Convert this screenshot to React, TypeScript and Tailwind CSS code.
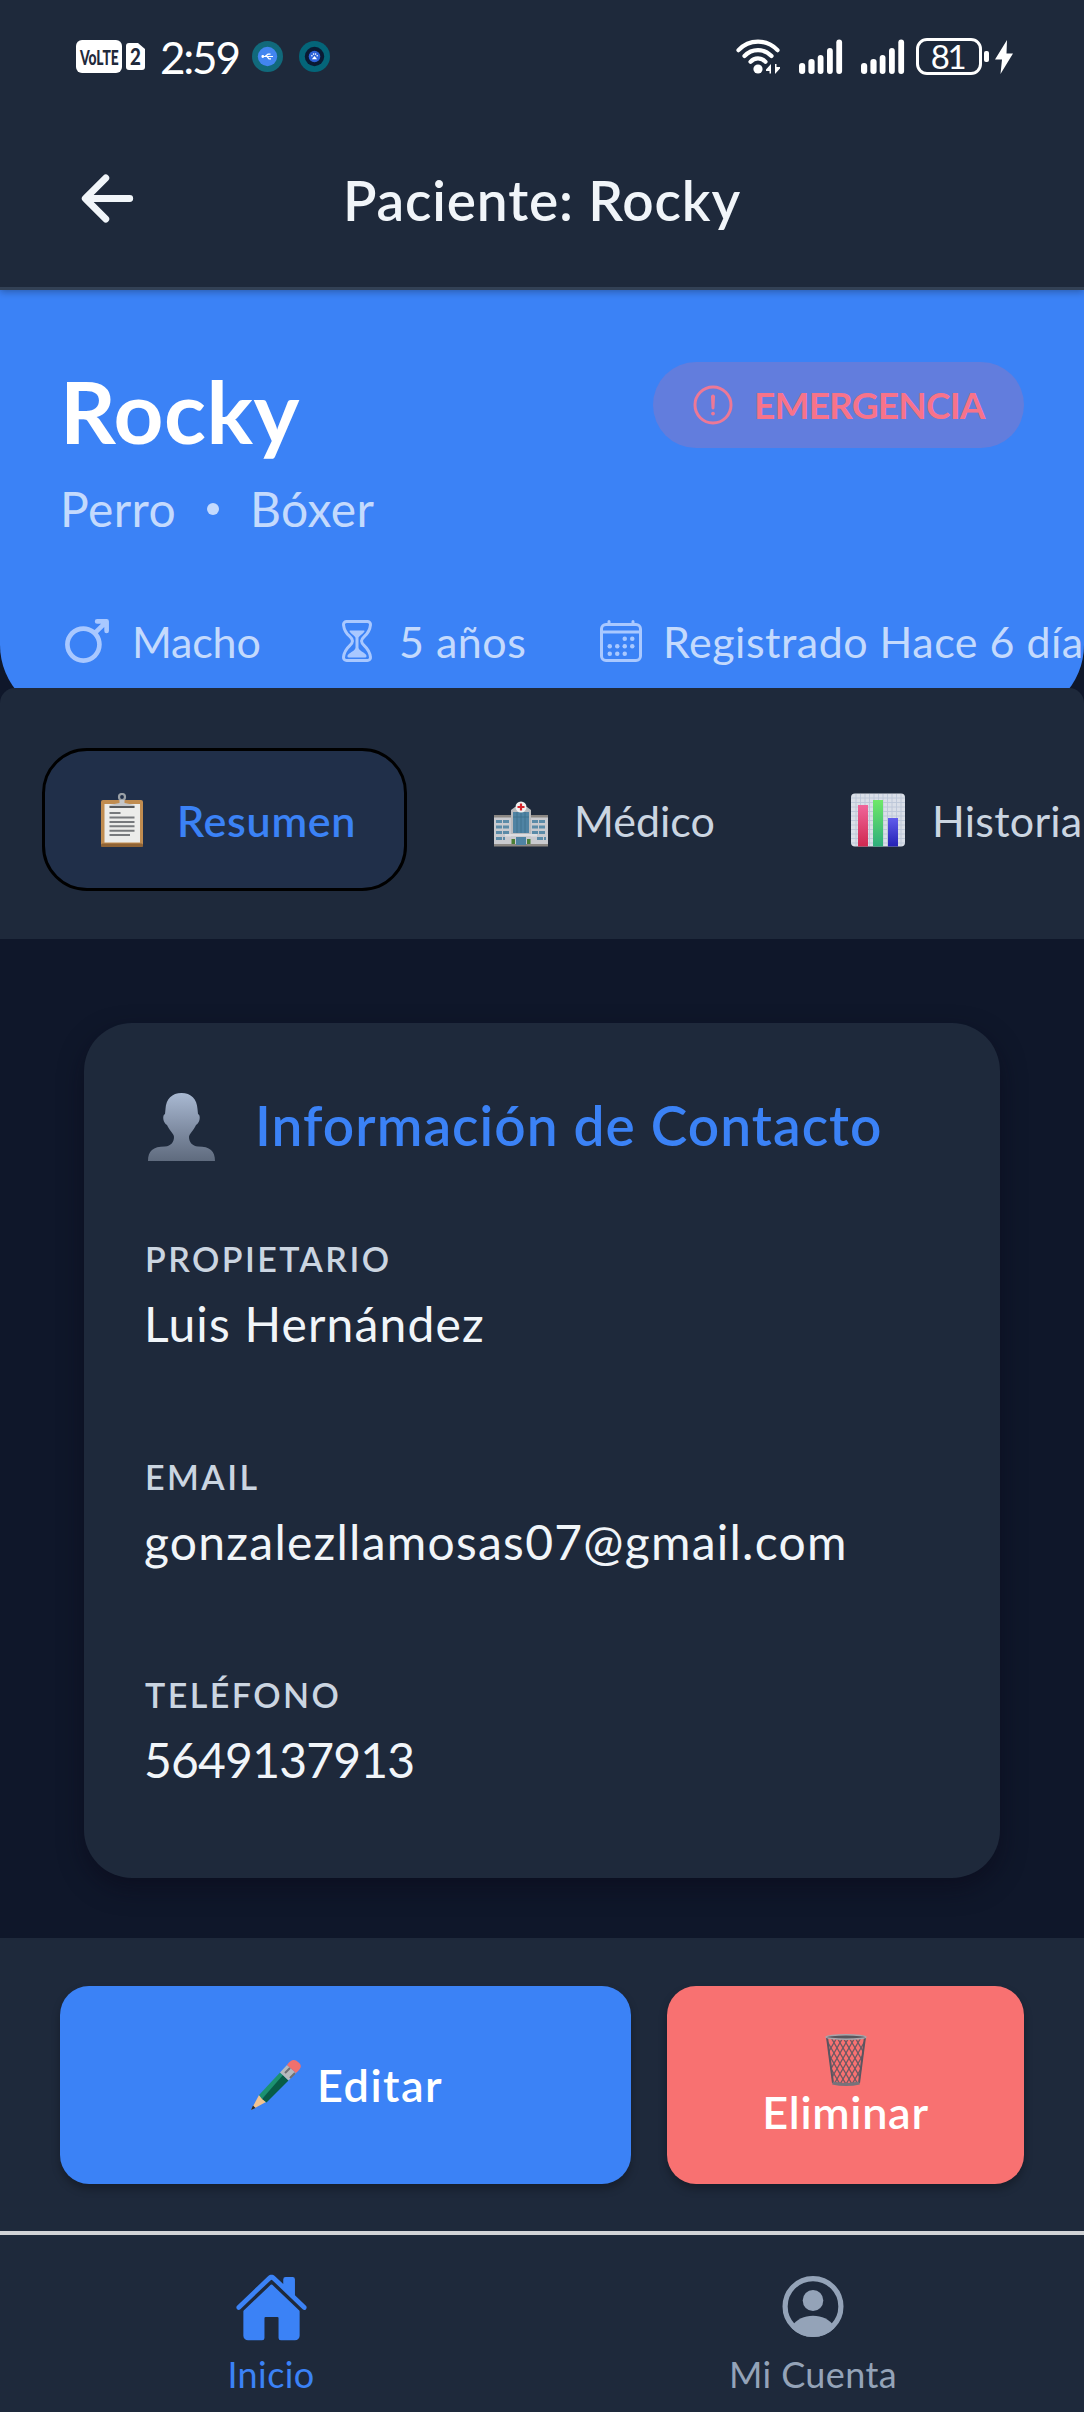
import React from "react";
import {
  IoAlertCircleOutline,
  IoArrowBack,
  IoCalendarOutline,
  IoHome,
  IoHourglassOutline,
  IoMale,
} from "react-icons/io5";

function SignalBars() {
  return (
    <svg width="44" height="35" viewBox="0 0 44 35" fill="#fff">
      <rect x="0" y="24" width="6.2" height="11" rx="3" />
      <rect x="9.4" y="20" width="6.2" height="15" rx="3" />
      <rect x="18.7" y="16" width="5.8" height="19" rx="2.9" />
      <rect x="28" y="9" width="5.8" height="26" rx="2.9" />
      <rect x="37.3" y="0.5" width="5.8" height="34.5" rx="2.9" />
    </svg>
  );
}

function WifiIcon() {
  return (
    <svg width="45" height="35" viewBox="0 0 45 35" fill="none" stroke="#fff" strokeLinecap="round">
      <path d="M2.5 11.2C13-.2 31-.2 41.500 11.200" strokeWidth="4.200" />
      <path d="M8.500 17C16 9.200 28 9.200 35.500 17" strokeWidth="4.200" />
      <path d="M14.500 22.800C18.500 18.300 25.500 18.300 29.500 22.800" strokeWidth="4.200" />
      <circle cx="22" cy="30" r="4.600" fill="#fff" stroke="none" />
      <path d="M30 30.500l5-5.500v9.500h-1.500V32H30zM44 29.500l-5 5.500V25h1.500v3H44z" fill="#fff" stroke="none" />
    </svg>
  );
}

function StatusBar() {
  return (
    <div className="flex h-[113px] shrink-0 items-center pl-[76px] pr-[71px] text-white">
      <div className="flex h-[33px] w-[46px] items-center justify-center rounded-[6px] bg-white">
        <span className="scale-x-[0.66] text-[21px] font-black leading-[24px] text-[#1f293b]">VoLTE</span>
      </div>
      <div className="ml-1 flex h-[27px] w-[19px] items-center justify-center rounded-[3px] bg-white [clip-path:polygon(0_0,63%_0,100%_22%,100%_100%,0_100%)]">
        <span className="scale-x-[0.85] text-[22px] font-black leading-[24px] text-[#1f293b]">2</span>
      </div>
      <span className="ml-[15px] w-[92px] whitespace-nowrap text-[44px] leading-[50px] tracking-[-2.200px]">2:59</span>
      <svg width="31" height="31" viewBox="0 0 31 31">
        <circle cx="15.500" cy="15.500" r="15.500" fill="#11697b" />
        <circle cx="15.500" cy="15.500" r="9.700" fill="#4285f0" />
        <g stroke="#fff" strokeWidth="1.200" fill="none">
          <path d="M10 15.500h11M13 15.500l3-2.300h2.500M15 15.500l2 2.300h2" />
          <circle cx="10.800" cy="15.500" r="0.800" fill="#fff" />
        </g>
      </svg>
      <svg className="ml-4" width="31" height="31" viewBox="0 0 31 31">
        <circle cx="15.500" cy="15.500" r="15.500" fill="#046579" />
        <circle cx="15.500" cy="15.500" r="9.700" fill="#0a1a33" />
        <circle cx="15.500" cy="15.500" r="5.800" fill="#2d62d8" />
        <g fill="#fff">
          <path d="M15.500 15l2.600 3.200h-5.200z" />
          <circle cx="12.900" cy="14.700" r="0.800" />
          <circle cx="14.600" cy="13.100" r="0.800" />
          <circle cx="16.600" cy="13.100" r="0.800" />
          <circle cx="18.200" cy="14.700" r="0.800" />
        </g>
      </svg>
      <div className="ml-auto flex items-center">
        <WifiIcon />
        <div className="ml-[18px] flex gap-[18px]">
          <SignalBars />
          <SignalBars />
        </div>
        <div className="ml-[11px] flex h-[37px] w-[66px] items-center justify-center rounded-[11px] border-[3px] border-white pr-[3px] text-[33px] leading-none tracking-[-2.500px]">
          81
        </div>
        <div className="ml-[2px] h-[11px] w-[5px] rounded-[2px] bg-white" />
        <svg className="ml-[6px]" width="18" height="34" viewBox="0 0 18 34">
          <path d="M12 0L0 19.500H7L5.500 34 18 13.500H11.500Z" fill="#fff" />
        </svg>
      </div>
    </div>
  );
}

function Header() {
  return (
    <div className="relative flex h-[177px] shrink-0 items-center justify-center border-b-[3px] border-[#334155]">
      <IoArrowBack className="absolute left-[71px] top-[49px] size-[73px] text-[#f1f5f9]" />
      <h1 className="whitespace-nowrap text-[55px] font-semibold leading-[66px] tracking-[0.850px] text-[#f1f5f9]">Paciente: Rocky</h1>
    </div>
  );
}

function Hero() {
  return (
    <section className="-mb-[29px] h-[427px] shrink-0 overflow-hidden rounded-b-[72px] bg-[#3b82f6] pl-[60px] pt-[72px]">
      <div className="flex items-start justify-between pr-[60px]">
        <h2 className="text-[87px] font-bold leading-[98px] tracking-[0.500px] text-white">Rocky</h2>
        <div className="flex h-[86px] w-[371px] items-center rounded-full bg-[#627ddd] pl-[36px]">
          <IoAlertCircleOutline className="size-[48px] text-[#ed7896]" />
          <span className="ml-[17px] whitespace-nowrap text-[37px] font-bold tracking-[-0.800px] text-[#f7738a]">EMERGENCIA</span>
        </div>
      </div>
      <div className="mt-[19px] flex h-[60px] items-center text-[48px] tracking-[0.400px] text-[#c4dafd]">
        <span className="w-[147px] whitespace-nowrap">Perro</span>
        <span className="size-3 rounded-full bg-[#c4dafd]" />
        <span className="ml-[31px] whitespace-nowrap">Bóxer</span>
      </div>
      <div className="mt-[72px] flex h-[60px] items-center whitespace-nowrap text-[43px] text-[#c4dafd]">
        <IoMale className="size-[54px] shrink-0 text-[#a9c8ff]" />
        <span className="ml-[18px] w-[201px] shrink-0 pt-[3px] tracking-[-0.200px]">Macho</span>
        <IoHourglassOutline className="size-[48px] shrink-0 text-[#a9c8ff]" />
        <span className="ml-[18px] w-[198px] shrink-0 pt-[3px] tracking-[0.500px]">5 años</span>
        <IoCalendarOutline className="size-[48px] shrink-0 text-[#a9c8ff]" />
        <span className="ml-[18px] shrink-0 pt-[3px] tracking-[0.500px]">Registrado Hace 6 días</span>
      </div>
    </section>
  );
}

function ClipboardIcon() {
  return (
    <svg className="shrink-0" width="54" height="54" viewBox="0 0 54 54">
      <rect x="6" y="7" width="42" height="47" rx="2" fill="#c08c50" />
      <rect x="6" y="50.500" width="42" height="3.500" rx="1.500" fill="#8f6335" />
      <rect x="9.500" y="11" width="35.500" height="38.500" fill="#ececea" />
      <circle cx="27" cy="4" r="3" fill="none" stroke="#9aa0a6" strokeWidth="2.200" />
      <path d="M14.500 14.500V12l10-2V7h5v3l10 2v2.500z" fill="#c4c6c9" />
      <path d="M14.500 13h25v2h-25z" fill="#55585c" />
      <path d="M14.500 20h11M14.500 24.500h25M14.500 29h25M14.500 33.300h25M14.500 37.800h25M14.500 42h20.500" stroke="#77797c" strokeWidth="2" />
    </svg>
  );
}

function HospitalIcon() {
  return (
    <svg className="shrink-0" width="54" height="54" viewBox="0 0 54 54">
      <path d="M0 22h54v31H0z" fill="#c9cacf" />
      <path d="M0 22h54v2.500H0zM0 51h54v2.500H0z" fill="#8b8783" />
      <path d="M2 28.500h14M2 34h14M2 39.500h14M2 45.500h9M38 28.500h14M38 34h14M38 39.500h14M43 45.500h9" stroke="#5b8ba8" strokeWidth="3.200" strokeDasharray="6 1" />
      <path d="M17 17l4-3h12l4 3v27H17z" fill="#b9babd" />
      <path d="M19 19h16v21H19z" fill="#4f83a3" />
      <path d="M23 19v21M27 19v21M31 19v21M19 24h16" stroke="#3d6f8c" strokeWidth="0.800" />
      <path d="M11 41h32v2.500H11z" fill="#dcdde0" />
      <path d="M22 44h10v8H22z" fill="#4f83a3" />
      <path d="M17.500 46h3.500v5h-3.500zM33 46h3.500v5H33z" fill="#4b7f35" />
      <circle cx="27" cy="14" r="5.500" fill="#f1f1f1" />
      <path d="M27 10.500v7M23.500 14h7" stroke="#d5242c" strokeWidth="2.200" />
    </svg>
  );
}

function ChartIcon() {
  return (
    <svg className="shrink-0" width="54" height="54" viewBox="0 0 54 54">
      <defs>
        <linearGradient id="barRed" x2="0" y2="1"><stop stopColor="#f0659a" /><stop offset="1" stopColor="#cf2850" /></linearGradient>
        <linearGradient id="barGreen" x2="0" y2="1"><stop stopColor="#70e868" /><stop offset="1" stopColor="#2fae7c" /></linearGradient>
        <linearGradient id="barBlue" x2="0" y2="1"><stop stopColor="#615cec" /><stop offset="1" stopColor="#2421b4" /></linearGradient>
      </defs>
      <rect y="0.500" width="54" height="53" rx="4" fill="#dadfe8" />
      <path d="M5 1v52M9.500 1v52M14 1v52M18.500 1v52M23 1v52M27.500 1v52M32 1v52M36.500 1v52M41 1v52M45.500 1v52M50 1v52M0 5h54M0 9.500h54M0 14h54M0 18.500h54M0 23h54M0 27.500h54M0 32h54M0 36.500h54M0 41h54M0 45.500h54M0 50h54" stroke="#bcc6d8" strokeWidth="0.900" />
      <rect x="7" y="12" width="10" height="41.500" fill="url(#barRed)" />
      <rect x="22" y="7" width="10" height="46.500" fill="url(#barGreen)" />
      <rect x="37" y="25" width="10" height="28.500" fill="url(#barBlue)" />
    </svg>
  );
}

function Tabs() {
  return (
    <nav className="relative z-10 flex h-[251px] shrink-0 items-start gap-[31px] overflow-hidden rounded-t-[15px] bg-[#1e293b] pl-[42px] pt-[60px] text-[43px] text-[#cbd5e1] whitespace-nowrap">
      <div className="flex h-[143px] w-[365px] shrink-0 items-center rounded-[45px] border-[3px] border-black bg-[#202f49] pl-[50px]">
        <ClipboardIcon />
        <span className="ml-[28px] pt-[3px] font-semibold tracking-[0.700px] text-[#3b82f6]">Resumen</span>
      </div>
      <div className="flex h-[143px] w-[326px] shrink-0 items-center pl-[56px]">
        <HospitalIcon />
        <span className="ml-[26px] pt-[3px]">Médico</span>
      </div>
      <div className="flex h-[143px] shrink-0 items-center pl-[56px]">
        <ChartIcon />
        <span className="ml-[27px] pt-[3px] tracking-[0.250px]">Historial</span>
      </div>
    </nav>
  );
}

function PersonIcon() {
  return (
    <svg width="67" height="68" viewBox="0 0 67 68">
      <defs>
        <linearGradient id="bust" x2="0" y2="1"><stop stopColor="#a9b9d2" /><stop offset="0.550" stopColor="#7f8ca2" /><stop offset="1" stopColor="#5f6b7e" /></linearGradient>
      </defs>
      <path d="M33.500 0C43 0 49 6 49.500 16L50 21C53 22 52 30 48 32C46 37 41 41 41 44C41 49 44 53 50 53.500C62 53.500 67 58 67 68H0C0 58 5 53.500 17 53.500C23 53 26 49 26 44C26 41 21 37 19 32C15 30 14 22 17 21L17.500 16C18 6 24 0 33.500 0Z" fill="url(#bust)" />
    </svg>
  );
}

function Field({ label, value, tracking }: { label: string; value: string; tracking: string }) {
  return (
    <div className="h-[218px] whitespace-nowrap">
      <div className="pl-px text-[34px] font-semibold leading-[40px] tracking-[2.450px] text-[#cbd5e1]">{label}</div>
      <div className={`mt-[15px] text-[48px] leading-[60px] text-[#f1f5f9] ${tracking}`}>{value}</div>
    </div>
  );
}

function ContactCard() {
  return (
    <section className="mx-[84px] mt-[84px] h-[855px] shrink-0 rounded-[48px] bg-[#1e293b] pl-[60px] pt-[64px] shadow-[0_10px_24px_rgba(10,8,24,0.5)]">
      <div className="flex h-[80px] items-center pl-1">
        <PersonIcon />
        <h3 className="ml-[40px] whitespace-nowrap pb-[3px] text-[55px] font-semibold tracking-[1.080px] text-[#3b82f6]">Información de Contacto</h3>
      </div>
      <div className="mt-[72px]">
        <Field label="PROPIETARIO" value="Luis Hernández" tracking="tracking-[1.150px]" />
        <Field label="EMAIL" value="gonzalezllamosas07@gmail.com" tracking="tracking-[1.250px]" />
        <Field label="TELÉFONO" value="5649137913" tracking="tracking-[-0.800px]" />
      </div>
    </section>
  );
}

function PencilIcon() {
  return (
    <svg width="50" height="50" viewBox="0 0 50 50">
      <path d="M0 50L8 35L15 42Z" fill="#f2c391" />
      <path d="M0 50L2 45.500L4.500 48Z" fill="#26282b" />
      <path d="M8 35L29 12.500L33 16L11 39Z" fill="#1c9270" />
      <path d="M11 39L32 15L37.500 20.500L15.500 42.500Z" fill="#075c46" />
      <path d="M29 12.500L36 5L45 13L37.500 20.500Z" fill="#b7b9bc" />
      <path d="M34 13L39 8M39 18l5-5" stroke="#6d6f73" strokeWidth="2" />
      <path d="M36 5C40-1 44-1 47 2C51 5 51 8 45 13Z" fill="#f0706d" />
    </svg>
  );
}

function TrashIcon() {
  return (
    <svg width="42" height="52" viewBox="0 0 42 52" fill="none">
      <defs>
        <clipPath id="basket"><path d="M1.500 3H40.500L34.500 49H7.500Z" /></clipPath>
      </defs>
      <g clipPath="url(#basket)" stroke="#705a63" strokeWidth="1.300">
        <path d="M-14 0L16 52M-8 0L22 52M-2 0L28 52M4 0L34 52M10 0L40 52M16 0L46 52M22 0L52 52M28 0L58 52" />
        <path d="M56 0L26 52M50 0L20 52M44 0L14 52M38 0L8 52M32 0L2 52M26 0L-4 52M20 0L-10 52M14 0L-16 52" />
      </g>
      <path d="M2 3L8 49M40 3L34 49" stroke="#5b5560" strokeWidth="2" />
      <ellipse cx="21" cy="3" rx="20" ry="2.200" fill="#59565c" stroke="#a9a5ab" strokeWidth="1.400" />
      <path d="M7.500 49q13.500 3 27 0" stroke="#77727a" strokeWidth="3" />
    </svg>
  );
}

function Actions() {
  return (
    <div className="mt-[60px] flex h-[293px] shrink-0 gap-[36px] bg-[#1e293b] px-[60px] pt-[48px] text-[45px] font-semibold text-white">
      <button className="flex h-[198px] w-[571px] items-center justify-center gap-[16px] rounded-[29px] bg-[#3b82f6] shadow-[0_5px_9px_rgba(0,0,0,0.28)]">
        <PencilIcon />
        <span className="w-[123px] pt-[2px] text-left tracking-[1.500px]">Editar</span>
      </button>
      <button className="flex h-[198px] w-[357px] flex-col items-center rounded-[29px] bg-[#f87171] pt-[48px] shadow-[0_5px_9px_rgba(0,0,0,0.28)]">
        <TrashIcon />
        <span className="mt-[-1px] leading-[54px] tracking-[0.700px]">Eliminar</span>
      </button>
    </div>
  );
}

function AccountIcon() {
  return (
    <svg width="62" height="61" viewBox="0 0 62 61">
      <defs>
        <clipPath id="accountDisc"><circle cx="31" cy="30.500" r="30.500" /></clipPath>
      </defs>
      <circle cx="31" cy="30.500" r="27.900" fill="none" stroke="#94a3b8" strokeWidth="5.200" />
      <ellipse cx="31" cy="24.500" rx="10.300" ry="10.500" fill="#94a3b8" />
      <path d="M10 50C15 43 22 39.700 31 39.700S47 43 52 50V61H10Z" fill="#94a3b8" clipPath="url(#accountDisc)" />
    </svg>
  );
}

function BottomNav() {
  return (
    <nav className="flex h-[181px] shrink-0 border-t-[4px] border-[#d0d2d5] bg-[#1e293b] text-[36px] leading-[44px] tracking-[0.400px]">
      <div className="flex flex-1 flex-col items-center pt-[35px] text-[#3b82f6]">
        <IoHome className="size-[75px]" />
        <span className="mt-[7px]">Inicio</span>
      </div>
      <div className="flex flex-1 flex-col items-center pt-[41px] text-[#94a3b8]">
        <AccountIcon />
        <span className="mt-[15px]">Mi Cuenta</span>
      </div>
    </nav>
  );
}

export default function App() {
  return (
    <div className="flex h-[2412px] w-[1084px] flex-col overflow-hidden bg-[#0f172a] font-['Lato',sans-serif]">
      <div className="relative z-10 shrink-0 bg-[#1e293b] shadow-[0_2px_7px_rgba(15,23,42,0.35)]">
        <StatusBar />
        <Header />
      </div>
      <Hero />
      <Tabs />
      <ContactCard />
      <Actions />
      <BottomNav />
    </div>
  );
}
